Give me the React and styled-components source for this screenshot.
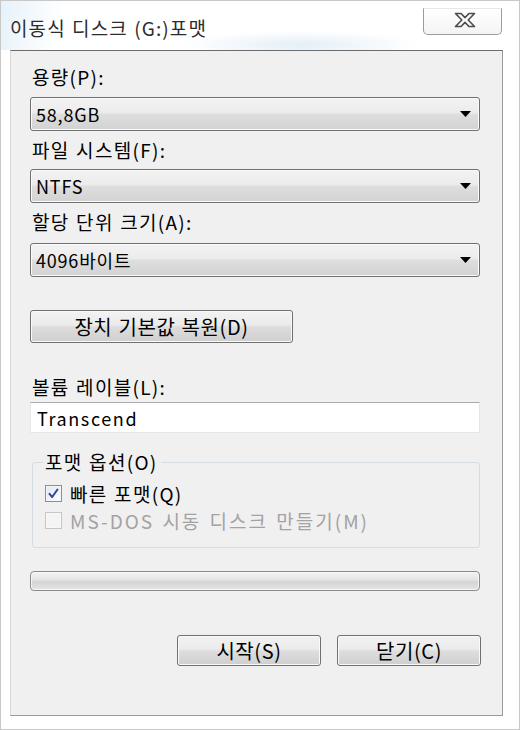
import styled, { createGlobalStyle } from "styled-components";

const GlobalStyle = createGlobalStyle`
  body {
    margin: 0;
    background: #ffffff;
    font-family: "Noto Sans CJK KR", "Noto Sans", sans-serif;
  }
`;

const FONT = `"Noto Sans CJK KR", "Noto Sans", sans-serif`;

function Combo({ value }) {
  return (
    <Select>
      <SelectText>{value}</SelectText>
      <Arrow viewBox="0 0 11 6">
        <path d="M0 0 H11 L5.5 6 Z" fill="#000" />
      </Arrow>
    </Select>
  );
}

function CloseIcon() {
  return (
    <svg width="24" height="16" viewBox="0 0 24 16">
      <path
        d="M2.5 1.5 H8 L12 5.6 L16 1.5 H21.5 L15.2 8 L21.5 14.5 H16 L12 10.4 L8 14.5 H2.5 L8.8 8 Z"
        fill="#fbfbfb"
        stroke="#4c4c4c"
        strokeWidth="1.6"
        strokeLinejoin="round"
      />
    </svg>
  );
}

function App() {
  return (
    <>
      <GlobalStyle />
      <Frame>
        <TitleBar>
          <Title>이동식 디스크 (G:)포맷</Title>
          <CloseButton>
            <CloseIcon />
          </CloseButton>
        </TitleBar>
        <Panel>
          <Label>용량(P):</Label>
          <Gap h={10} />
          <Combo value="58,8GB" />
          <Gap h={9} />
          <Label>파일 시스템(F):</Label>
          <Gap h={9} />
          <Combo value="NTFS" />
          <Gap h={9} />
          <Label>할당 단위 크기(A):</Label>
          <Gap h={11} />
          <Combo value="4096바이트" />
          <Gap h={33} />
          <Button w={263} h={33}>
            장치 기본값 복원(D)
          </Button>
          <Gap h={34} />
          <Label>볼륨 레이블(L):</Label>
          <Gap h={5} />
          <TextBox>Transcend</TextBox>
          <Group>
            <Legend>포맷 옵션(O)</Legend>
            <CheckRow>
              <Check checked>
                <svg width="13" height="13" viewBox="0 0 13 13">
                  <path
                    d="M2.5 6.8 L5.2 10 L10.5 2.5"
                    fill="none"
                    stroke="#33459a"
                    strokeWidth="2"
                    strokeLinecap="round"
                    strokeLinejoin="round"
                  />
                </svg>
              </Check>
              <CheckLabel>빠른 포맷(Q)</CheckLabel>
            </CheckRow>
            <CheckRow disabled>
              <Check disabled />
              <CheckLabel disabled wide>
                MS-DOS 시동 디스크 만들기(M)
              </CheckLabel>
            </CheckRow>
          </Group>
          <Progress />
          <ButtonRow>
            <Button w={144} h={31}>
              시작(S)
            </Button>
            <Button w={144} h={31}>
              닫기(C)
            </Button>
          </ButtonRow>
        </Panel>
      </Frame>
    </>
  );
}

export default App;

const Frame = styled.div`
  width: 520px;
  height: 730px;
  box-sizing: border-box;
  border: 1px solid #c8c8c8;
  background: #ffffff;
  display: flex;
  flex-direction: column;
  overflow: hidden;
`;

const TitleBar = styled.div`
  height: 49px;
  display: flex;
  justify-content: space-between;
  align-items: flex-start;
  padding: 0 17px 0 9px;
  background: linear-gradient(
      100deg,
      rgba(210, 230, 245, 0.55) 0%,
      rgba(255, 255, 255, 0) 12%
    ),
    radial-gradient(
      ellipse 120px 14px at 300px 44px,
      rgba(200, 222, 240, 0.5),
      rgba(255, 255, 255, 0)
    ),
    #ffffff;
`;

const Title = styled.div`
  margin-top: 15px;
  font-family: ${FONT};
  font-size: 19px;
  line-height: 24px;
  color: #2c2c2c;
  letter-spacing: 1.1px;
  word-spacing: 1px;
  white-space: nowrap;
  text-shadow: 0 0 6px rgba(255, 255, 255, 0.9);
`;

const CloseButton = styled.div`
  margin-top: 7px;
  width: 79px;
  height: 27px;
  box-sizing: border-box;
  border: 1px solid #9c9c9c;
  border-top-color: #e8e8e8;
  border-radius: 0 0 5px 5px;
  background: linear-gradient(#ffffff, #f4f4f4);
  display: flex;
  align-items: center;
  justify-content: center;
  padding: 0 0 3px 4px;
`;

const Panel = styled.div`
  margin-left: 9px;
  width: 493px;
  height: 666px;
  box-sizing: border-box;
  background: #f0f0f0;
  border-top: 1px solid #6c6c6c;
  border-left: 1px solid #d8d8d8;
  border-right: 1px solid #9a9a9a;
  border-bottom: 1px solid #9a9a9a;
  padding: 16px 0 0 19px;
  display: flex;
  flex-direction: column;
`;

const Gap = styled.div`
  height: ${({ h }) => h}px;
  flex: none;
`;

const Label = styled.div`
  height: 20px;
  padding-left: 2px;
  font-family: ${FONT};
  font-size: 19px;
  line-height: 20px;
  color: #000;
  letter-spacing: 1.3px;
  word-spacing: 1px;
  white-space: nowrap;
`;

const Select = styled.div`
  width: 450px;
  height: 34px;
  box-sizing: border-box;
  border: 1px solid #707070;
  border-radius: 3px;
  background: linear-gradient(
    #f3f3f3 0%,
    #ececec 45%,
    #dedede 52%,
    #d2d2d2 100%
  );
  box-shadow: inset 0 0 0 1px #fbfbfb;
  display: flex;
  align-items: center;
  justify-content: space-between;
  padding: 0 8px 0 5px;
`;

const SelectText = styled.span`
  font-family: ${FONT};
  font-size: 18px;
  color: #000;
  letter-spacing: 0.8px;
`;

const Arrow = styled.svg`
  width: 11px;
  height: 6px;
`;

const Button = styled.div`
  width: ${({ w }) => w}px;
  height: ${({ h }) => h}px;
  box-sizing: border-box;
  border: 1px solid #707070;
  border-radius: 3px;
  background: linear-gradient(
    #f2f2f2 0%,
    #ebebeb 45%,
    #dddddd 52%,
    #cfcfcf 100%
  );
  box-shadow: inset 0 0 0 1px #fafafa;
  display: flex;
  align-items: center;
  justify-content: center;
  font-family: ${FONT};
  font-size: 20px;
  color: #000;
  letter-spacing: 0.6px;
  word-spacing: 1px;
  white-space: nowrap;
`;

const TextBox = styled.div`
  width: 450px;
  height: 31px;
  box-sizing: border-box;
  background: #ffffff;
  border: 1px solid #e4e7ea;
  border-top-color: #a9abaf;
  padding-left: 6px;
  display: flex;
  align-items: center;
  font-family: ${FONT};
  font-size: 18px;
  color: #000;
  letter-spacing: 1.6px;
`;

const Group = styled.fieldset`
  margin: 19px 0 0 2px;
  width: 448px;
  box-sizing: border-box;
  border: 1px solid #d5dde2;
  border-radius: 3px;
  padding: 0 0 18px 11px;
  min-width: 0;
`;

const Legend = styled.legend`
  padding: 0 3px 0 1px;
  font-family: ${FONT};
  font-size: 19px;
  line-height: 20px;
  color: #000;
  letter-spacing: 1.3px;
  word-spacing: 1px;
  white-space: nowrap;
`;

const CheckRow = styled.div`
  display: flex;
  align-items: center;
  gap: 8px;
  height: 17px;
  margin-top: ${({ disabled }) => (disabled ? 10 : 13)}px;
  margin-left: 1px;
`;

const Check = styled.div`
  width: 17px;
  height: 17px;
  box-sizing: border-box;
  border: 1px solid ${({ disabled }) => (disabled ? "#c6c6c6" : "#8e8f8f")};
  background: ${({ disabled }) =>
    disabled ? "#f4f4f4" : "linear-gradient(135deg, #dfe6f1, #ffffff)"};
  box-shadow: inset 0 0 0 1px
    ${({ disabled }) => (disabled ? "#f8f8f8" : "#f3f5f9")};
  display: flex;
  align-items: center;
  justify-content: center;
`;

const CheckLabel = styled.span`
  font-family: ${FONT};
  font-size: 19px;
  line-height: 20px;
  color: ${({ disabled }) => (disabled ? "#a3a3a3" : "#000")};
  letter-spacing: ${({ wide }) => (wide ? 2 : 1.3)}px;
  word-spacing: ${({ wide }) => (wide ? 2 : 1)}px;
  white-space: nowrap;
`;

const Progress = styled.div`
  margin-top: 23px;
  width: 450px;
  height: 20px;
  box-sizing: border-box;
  border: 1px solid #8a8a8a;
  border-radius: 4px;
  background: linear-gradient(#f4f4f4 0%, #e3e3e3 45%, #d3d3d3 55%, #e6e6e6 100%);
  box-shadow: inset 0 0 0 1px #f6f6f6;
`;

const ButtonRow = styled.div`
  margin-top: 44px;
  width: 451px;
  display: flex;
  justify-content: flex-end;
  gap: 16px;
`;
